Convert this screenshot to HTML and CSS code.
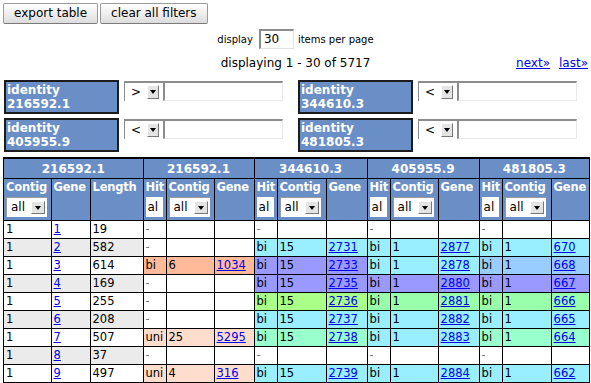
FILE: index.html
```html
<!DOCTYPE html>
<html>
<head>
<meta charset="utf-8">
<link rel="stylesheet" href="styles.css">
</head>
<body>
<div class="toolbar">
  <button class="btn">export table</button>
  <button class="btn">clear all filters</button>
</div>
<div class="perpage">
  <span>display</span>
  <span class="pp-input">30</span>
  <span>items per page</span>
</div>
<div class="status">
  <span></span>
  <span class="status-text">displaying 1 - 30 of 5717</span>
  <span class="pager"><a href="#">next»</a><a href="#">last»</a></span>
</div>
<div class="filters">
  <div class="frow">
    <div class="fpair">
      <div class="flabel">identity<br>216592.1</div>
      <div class="fctrl"><span class="sel"><span class="sel-val">&gt;</span><span class="arrow"></span></span><span class="ftext"></span></div>
    </div>
    <div class="fpair">
      <div class="flabel">identity<br>344610.3</div>
      <div class="fctrl"><span class="sel"><span class="sel-val">&lt;</span><span class="arrow"></span></span><span class="ftext"></span></div>
    </div>
  </div>
  <div class="frow">
    <div class="fpair">
      <div class="flabel">identity<br>405955.9</div>
      <div class="fctrl"><span class="sel"><span class="sel-val">&lt;</span><span class="arrow"></span></span><span class="ftext"></span></div>
    </div>
    <div class="fpair">
      <div class="flabel">identity<br>481805.3</div>
      <div class="fctrl"><span class="sel"><span class="sel-val">&lt;</span><span class="arrow"></span></span><span class="ftext"></span></div>
    </div>
  </div>
</div>
<table class="grid">
  <colgroup>
    <col class="w48"><col class="w39"><col class="w53">
    <col class="w23"><col class="w48"><col class="w40">
    <col class="w23"><col class="w49"><col class="w41">
    <col class="w23"><col class="w48"><col class="w41">
    <col class="w23"><col class="w49"><col class="w39">
  </colgroup>
  <thead>
    <tr class="grp">
      <th colspan="3">216592.1</th>
      <th colspan="3">216592.1</th>
      <th colspan="3">344610.3</th>
      <th colspan="3">405955.9</th>
      <th colspan="3">481805.3</th>
    </tr>
    <tr class="sub">
      <th>Contig<span class="hsel"><span class="hsel-val">all</span><span class="harrow"></span></span></th>
      <th>Gene</th>
      <th>Length</th>
      <th>Hit<span class="hhit">al</span></th>
      <th>Contig<span class="hsel"><span class="hsel-val">all</span><span class="harrow"></span></span></th>
      <th>Gene</th>
      <th>Hit<span class="hhit">al</span></th>
      <th>Contig<span class="hsel"><span class="hsel-val">all</span><span class="harrow"></span></span></th>
      <th>Gene</th>
      <th>Hit<span class="hhit">al</span></th>
      <th>Contig<span class="hsel"><span class="hsel-val">all</span><span class="harrow"></span></span></th>
      <th>Gene</th>
      <th>Hit<span class="hhit">al</span></th>
      <th>Contig<span class="hsel"><span class="hsel-val">all</span><span class="harrow"></span></span></th>
      <th>Gene</th>
    </tr>
  </thead>
  <tbody>
    <tr>
      <td>1</td><td><a href="#">1</a></td><td>19</td>
      <td class="dash">-</td><td></td><td></td>
      <td class="dash">-</td><td></td><td></td>
      <td class="dash">-</td><td></td><td></td>
      <td class="dash">-</td><td></td><td></td>
    </tr>
    <tr class="alt">
      <td>1</td><td><a href="#">2</a></td><td>582</td>
      <td class="dash">-</td><td></td><td></td>
      <td class="c-cyan">bi</td><td class="c-cyan">15</td><td class="c-cyan"><a href="#">2731</a></td>
      <td class="c-cyan">bi</td><td class="c-cyan">1</td><td class="c-cyan"><a href="#">2877</a></td>
      <td class="c-cyan">bi</td><td class="c-cyan">1</td><td class="c-cyan"><a href="#">670</a></td>
    </tr>
    <tr>
      <td>1</td><td><a href="#">3</a></td><td>614</td>
      <td class="c-salmon">bi</td><td class="c-salmon">6</td><td class="c-salmon"><a href="#">1034</a></td>
      <td class="c-purple">bi</td><td class="c-purple">15</td><td class="c-purple"><a href="#">2733</a></td>
      <td class="c-cyan">bi</td><td class="c-cyan">1</td><td class="c-cyan"><a href="#">2878</a></td>
      <td class="c-lblue">bi</td><td class="c-lblue">1</td><td class="c-lblue"><a href="#">668</a></td>
    </tr>
    <tr class="alt">
      <td>1</td><td><a href="#">4</a></td><td>169</td>
      <td class="dash">-</td><td></td><td></td>
      <td class="c-purple">bi</td><td class="c-purple">15</td><td class="c-purple"><a href="#">2735</a></td>
      <td class="c-purple">bi</td><td class="c-purple">1</td><td class="c-purple"><a href="#">2880</a></td>
      <td class="c-purple">bi</td><td class="c-purple">1</td><td class="c-purple"><a href="#">667</a></td>
    </tr>
    <tr>
      <td>1</td><td><a href="#">5</a></td><td>255</td>
      <td class="dash">-</td><td></td><td></td>
      <td class="c-ygreen">bi</td><td class="c-ygreen">15</td><td class="c-ygreen"><a href="#">2736</a></td>
      <td class="c-green">bi</td><td class="c-green">1</td><td class="c-green"><a href="#">2881</a></td>
      <td class="c-green">bi</td><td class="c-green">1</td><td class="c-green"><a href="#">666</a></td>
    </tr>
    <tr class="alt">
      <td>1</td><td><a href="#">6</a></td><td>208</td>
      <td class="dash">-</td><td></td><td></td>
      <td class="c-cyan">bi</td><td class="c-cyan">15</td><td class="c-cyan"><a href="#">2737</a></td>
      <td class="c-cyan">bi</td><td class="c-cyan">1</td><td class="c-cyan"><a href="#">2882</a></td>
      <td class="c-cyan">bi</td><td class="c-cyan">1</td><td class="c-cyan"><a href="#">665</a></td>
    </tr>
    <tr>
      <td>1</td><td><a href="#">7</a></td><td>507</td>
      <td class="c-lsalmon">uni</td><td class="c-lsalmon">25</td><td class="c-lsalmon"><a href="#">5295</a></td>
      <td class="c-mint">bi</td><td class="c-mint">15</td><td class="c-mint"><a href="#">2738</a></td>
      <td class="c-cyan">bi</td><td class="c-cyan">1</td><td class="c-cyan"><a href="#">2883</a></td>
      <td class="c-mint">bi</td><td class="c-mint">1</td><td class="c-mint"><a href="#">664</a></td>
    </tr>
    <tr class="alt">
      <td>1</td><td><a href="#">8</a></td><td>37</td>
      <td class="dash">-</td><td></td><td></td>
      <td class="dash">-</td><td></td><td></td>
      <td class="dash">-</td><td></td><td></td>
      <td class="dash">-</td><td></td><td></td>
    </tr>
    <tr>
      <td>1</td><td><a href="#">9</a></td><td>497</td>
      <td class="c-lsalmon">uni</td><td class="c-lsalmon">4</td><td class="c-lsalmon"><a href="#">316</a></td>
      <td class="c-cyan">bi</td><td class="c-cyan">15</td><td class="c-cyan"><a href="#">2739</a></td>
      <td class="c-cyan">bi</td><td class="c-cyan">1</td><td class="c-cyan"><a href="#">2884</a></td>
      <td class="c-cyan">bi</td><td class="c-cyan">1</td><td class="c-cyan"><a href="#">662</a></td>
    </tr>
  </tbody>
</table>
</body>
</html>
```
FILE: styles.css
```css
html, body {
  background: #fff;
}
body {
  margin: 3px 1px 3px 3px;
  font-family: "DejaVu Sans", Verdana, sans-serif;
  font-size: 12px;
  color: #000;
}
a {
  color: #0000ee;
  text-decoration: underline;
}

/* toolbar */
.toolbar {
  display: flex;
  gap: 2px;
}
.btn {
  height: 21px;
  padding: 0 10px;
  border: 1px solid #9a9a9a;
  border-bottom-color: #7a7a7a;
  border-radius: 2px;
  background: linear-gradient(#ffffff, #f0f0f0 45%, #dcdcdc);
  font-family: "DejaVu Sans", Verdana, sans-serif;
  font-size: 12px;
  color: #000;
  line-height: 19px;
}

/* per page */
.perpage {
  display: flex;
  justify-content: center;
  align-items: center;
  margin: 5px 2px 0 0;
  font-size: 10px;
}
.pp-input {
  box-sizing: border-box;
  width: 35px;
  height: 20px;
  margin: 0 4px 0 6px;
  padding-left: 3px;
  border-top: 2px solid #8c8c8c;
  border-left: 2px solid #8c8c8c;
  border-right: 1px solid #e2e2e2;
  border-bottom: 1px solid #e2e2e2;
  font-size: 12px;
  line-height: 17px;
  background: #fff;
}

/* status line */
.status {
  display: grid;
  grid-template-columns: 1fr auto 1fr;
  margin: 7px 2px 0 0;
  line-height: 15px;
}
.pager {
  display: flex;
  justify-content: flex-end;
  gap: 9px;
}

/* filters */
.filters {
  margin-top: 9px;
  margin-left: 1px;
  display: flex;
  flex-direction: column;
  gap: 4px;
}
.frow {
  display: flex;
  gap: 15px;
}
.fpair {
  display: flex;
  gap: 5px;
}
.flabel {
  box-sizing: border-box;
  width: 115px;
  height: 34px;
  border: 2px solid #1c1c1c;
  background: #6a8ec6;
  color: #fff;
  font-weight: bold;
  font-size: 12px;
  line-height: 14px;
  padding: 1px 1px;
}
.fctrl {
  display: flex;
  width: 159px;
  height: 20px;
  margin-top: 1px;
}
.sel {
  box-sizing: border-box;
  width: 39px;
  height: 20px;
  display: flex;
  align-items: center;
  border-top: 2px solid #8c8c8c;
  border-left: 1px solid #8c8c8c;
  background: #fff;
}
.sel-val {
  width: 16px;
  padding-left: 6px;
  font-size: 12px;
}
.arrow {
  box-sizing: border-box;
  width: 12px;
  height: 14px;
  background: #e4e4e4;
  border-top: 1px solid #fff;
  border-left: 1px solid #fff;
  border-right: 1px solid #777;
  border-bottom: 1px solid #777;
  position: relative;
}
.arrow::after {
  content: "";
  position: absolute;
  left: 2px;
  top: 4px;
  border-left: 3.5px solid transparent;
  border-right: 3.5px solid transparent;
  border-top: 4px solid #000;
}
.ftext {
  flex: 1;
  box-sizing: border-box;
  height: 20px;
  border-top: 2px solid #8c8c8c;
  border-left: 2px solid #8c8c8c;
  border-right: 1px solid #e8e8e8;
  border-bottom: 1px solid #e8e8e8;
  background: #fff;
}

/* grid table */
.grid {
  margin-top: 5px;
  margin-left: -1px;
  border-collapse: collapse;
  table-layout: fixed;
  width: 589px;
  border: 2px solid #000;
  font-size: 11.5px;
}
.w48 { width: 48px; }
.w39 { width: 39px; }
.w53 { width: 53px; }
.w23 { width: 23px; }
.w40 { width: 40px; }
.w49 { width: 49px; }
.w41 { width: 41px; }

.grid th {
  background: #6a8ec6;
  color: #fff;
  border: 1px solid #000;
  font-weight: bold;
  white-space: nowrap;
}
.grp th {
  height: 19px;
  padding: 0;
  font-size: 12px;
  text-align: center;
}
.sub th {
  text-align: left;
  vertical-align: top;
  padding: 1px 1px 3px 2px;
  line-height: 15px;
  height: 37px;
  font-size: 11.5px;
  letter-spacing: -0.2px;
}
.hsel {
  box-sizing: border-box;
  display: flex;
  align-items: center;
  width: 41px;
  height: 20px;
  margin-top: 2px;
  background: #fff;
  border-top: 1px solid #9a9a9a;
  border-left: 1px solid #9a9a9a;
  color: #000;
  font-weight: normal;
  letter-spacing: 0;
}
.hsel-val {
  width: 20px;
  padding-left: 4px;
  font-size: 12px;
}
.harrow {
  box-sizing: border-box;
  width: 14px;
  height: 13px;
  background: #e4e4e4;
  border-top: 1px solid #fff;
  border-left: 1px solid #fff;
  border-right: 1px solid #777;
  border-bottom: 1px solid #777;
  position: relative;
}
.harrow::after {
  content: "";
  position: absolute;
  left: 3px;
  top: 4px;
  border-left: 3.5px solid transparent;
  border-right: 3.5px solid transparent;
  border-top: 4px solid #000;
}
.hhit {
  display: block;
  box-sizing: border-box;
  width: 17px;
  height: 20px;
  margin-top: 2px;
  padding-left: 2px;
  background: #fff;
  color: #000;
  font-weight: normal;
  font-size: 12px;
  line-height: 20px;
  letter-spacing: 0;
  overflow: hidden;
}

.grid td {
  border: 1px solid #000;
  padding: 1px 2px;
  line-height: 15px;
  white-space: nowrap;
  overflow: hidden;
  background: #fff;
}
.grid tr.alt td:nth-child(-n+3) {
  background: #ebebeb;
}
.grid td.dash {
  color: #777;
}
.grid td.c-cyan { background: #99efff; }
.grid td.c-purple { background: #9999ff; }
.grid td.c-lblue { background: #99ccff; }
.grid td.c-ygreen { background: #aaff88; }
.grid td.c-green { background: #99ffaa; }
.grid td.c-mint { background: #99ffcc; }
.grid td.c-salmon { background: #ffbb99; }
.grid td.c-lsalmon { background: #ffddcc; }
```
